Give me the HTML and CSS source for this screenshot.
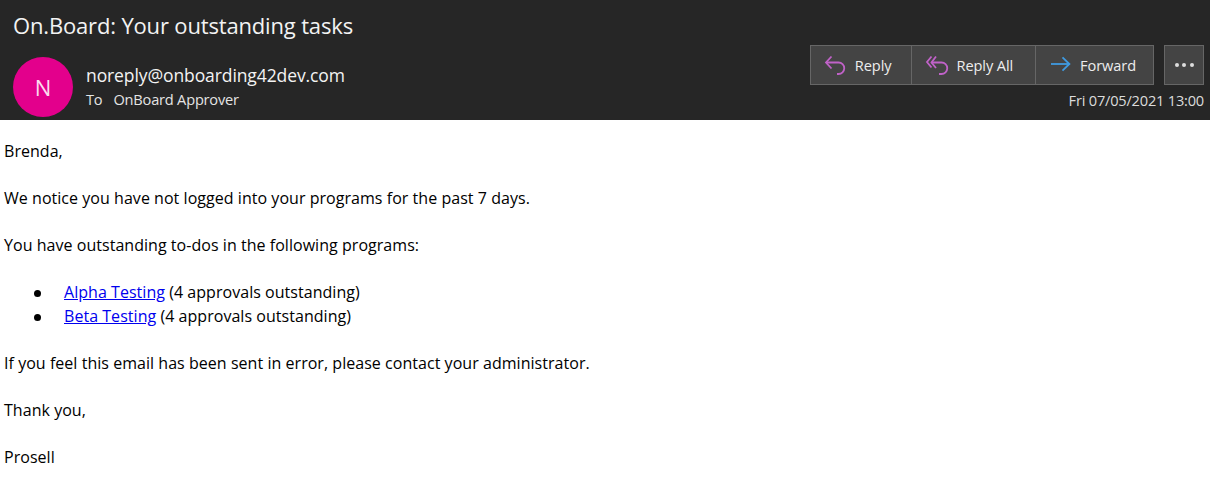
FILE: index.html
```html
<!DOCTYPE html>
<html lang="en">
<head>
    <meta charset="UTF-8">
    <meta name="viewport" content="width=device-width, initial-scale=1.0">
    <title>On.Board: Your outstanding tasks</title>
    <link rel="stylesheet" href="styles.css">
</head>
<body>

    <header class="mail-header">
        <h1 class="subject">On.Board: Your outstanding tasks</h1>
        <div class="header-row">
            <div class="sender">
                <div class="avatar">N</div>
                <div class="sender-info">
                    <div class="sender-email">noreply@onboarding42dev.com</div>
                    <div class="recipients"><span class="to-label">To</span>OnBoard Approver</div>
                </div>
            </div>
            <div class="header-side">
                <div class="actions">
                    <div class="button-group">
                        <button class="action">
                            <svg class="icon" viewBox="0 0 24 24" width="24" height="24" fill="none" stroke="#c062c8" stroke-width="1.8">
                                <path d="M7.5 3.5 2 9.5l5.5 6"/>
                                <path d="M2 9.5h12.5a5.75 5.75 0 0 1 0 11.5H13"/>
                            </svg>
                            Reply
                        </button>
                        <button class="action reply-all">
                            <svg class="icon" viewBox="0 0 24 24" width="24" height="24" fill="none" stroke="#c062c8" stroke-width="1.8">
                                <path d="M6.5 3.5 2 9l4.5 5.5"/>
                                <path d="M11 3.5 6.5 9.5l4.5 5.5"/>
                                <path d="M6.5 9.5h10a5.75 5.75 0 0 1 0 11.5H14"/>
                            </svg>
                            Reply All
                        </button>
                        <button class="action">
                            <svg class="icon" viewBox="0 0 24 24" width="24" height="24" fill="none" stroke="#3f9ae0" stroke-width="1.8">
                                <path d="M2 11h18.5"/>
                                <path d="m13.5 4.3 6.9 6.7-6.9 6.7"/>
                            </svg>
                            Forward
                        </button>
                    </div>
                    <button class="more"><span></span><span></span><span></span></button>
                </div>
                <div class="sent-date">Fri 07/05/2021 13:00</div>
            </div>
        </div>
    </header>

    <main class="mail-body">
        <p>Brenda,</p>
        <p>We notice you have not logged into your programs for the past 7 days.</p>
        <p>You have outstanding to-dos in the following programs:</p>
        <ul>
            <li><a href="#">Alpha Testing</a> (4 approvals outstanding)</li>
            <li><a href="#">Beta Testing</a> (4 approvals outstanding)</li>
        </ul>
        <p>If you feel this email has been sent in error, please contact your administrator.</p>
        <p>Thank you,</p>
        <p>Prosell</p>
    </main>

</body>
</html>
```

FILE: styles.css
```css
body {
    font-family: "Open Sans", "Noto Sans", sans-serif;
    margin: 0;
    padding: 0;
    background-color: #fff;
    color: #000;
}

.mail-header {
    background-color: #262626;
    color: #f3f3f3;
    height: 120px;
    box-sizing: border-box;
    padding: 10px 6px 0 13px;
}

.subject {
    font-size: 22px;
    font-weight: 400;
    line-height: 30px;
    margin: 0;
    letter-spacing: -0.16px;
}

.header-row {
    display: flex;
    justify-content: space-between;
    margin-top: 5px;
}

.sender {
    display: flex;
    align-items: flex-start;
    margin-top: 12px;
}

.avatar {
    width: 60px;
    height: 60px;
    border-radius: 50%;
    background-color: #e3008c;
    color: #fbdcee;
    font-size: 22px;
    display: flex;
    align-items: center;
    justify-content: center;
    margin-right: 13px;
}

.sender-info {
    padding-top: 6px;
}

.sender-email {
    font-size: 17.5px;
    line-height: 24px;
    letter-spacing: -0.1px;
}

.recipients {
    font-size: 14.6px;
    line-height: 24px;
    letter-spacing: -0.2px;
    color: #e4e4e4;
}

.to-label {
    margin-right: 11px;
}

.header-side {
    display: flex;
    flex-direction: column;
    align-items: flex-end;
}

.actions {
    display: flex;
    gap: 10px;
}

.button-group {
    display: flex;
    background-color: #444;
    border: 1px solid #666;
    height: 40px;
    box-sizing: border-box;
}

.action {
    display: flex;
    align-items: center;
    background: none;
    border: 0;
    border-right: 1px solid #666;
    color: #ededed;
    font-family: inherit;
    font-size: 14.6px;
    letter-spacing: -0.1px;
    padding: 0 20px 0 13px;
}

.action.reply-all {
    padding-right: 22px;
}

.action:last-child {
    border-right: 0;
    padding-right: 17px;
}

.icon {
    margin-right: 7px;
}

.more {
    width: 40px;
    height: 40px;
    display: flex;
    align-items: center;
    justify-content: center;
    gap: 3.5px;
    background-color: #444;
    border: 1px solid #666;
    padding: 0;
}

.more span {
    width: 4px;
    height: 4px;
    border-radius: 50%;
    background-color: #ddd;
}

.sent-date {
    font-size: 14.6px;
    line-height: 18px;
    letter-spacing: -0.2px;
    color: #dcdcdc;
    margin-top: 6px;
}

.mail-body {
    padding: 19.5px 4px 0;
    font-size: 16px;
    line-height: 23.5px;
    letter-spacing: 0.04px;
}

.mail-body p {
    margin: 0 0 23.5px;
}

.mail-body ul {
    margin: 0 0 23.5px;
    padding-left: 60px;
    list-style: none;
}

.mail-body li {
    position: relative;
}

.mail-body li + li {
    margin-top: 0.5px;
}

.mail-body li::before {
    content: "";
    position: absolute;
    left: -30px;
    top: 9px;
    width: 7px;
    height: 7px;
    border-radius: 50%;
    background-color: #000;
}

.mail-body a {
    color: #0000ee;
}
```
